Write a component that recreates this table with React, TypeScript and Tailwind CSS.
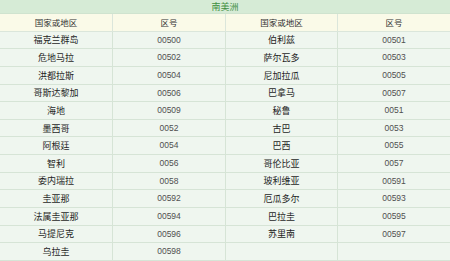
import React from "react";

const rows: [string, string, string, string][] = [
  ["福克兰群岛", "00500", "伯利兹", "00501"],
  ["危地马拉", "00502", "萨尔瓦多", "00503"],
  ["洪都拉斯", "00504", "尼加拉瓜", "00505"],
  ["哥斯达黎加", "00506", "巴拿马", "00507"],
  ["海地", "00509", "秘鲁", "0051"],
  ["墨西哥", "0052", "古巴", "0053"],
  ["阿根廷", "0054", "巴西", "0055"],
  ["智利", "0056", "哥伦比亚", "0057"],
  ["委内瑞拉", "0058", "玻利维亚", "00591"],
  ["圭亚那", "00592", "厄瓜多尔", "00593"],
  ["法属圭亚那", "00594", "巴拉圭", "00595"],
  ["马提尼克", "00596", "苏里南", "00597"],
  ["乌拉圭", "00598", "", ""],
];

function Cell({ text, index, header }: { text: string; index: number; header?: boolean }) {
  const base =
    "h-[17.64px] border-b flex items-center justify-center leading-none " +
    (index < 3 ? "border-r " : "");
  if (header) {
    return (
      <div
        className={
          base +
          "bg-[#fafae8] border-[#dbe6db] text-[8.5px] text-[#333] font-['Noto_Sans_CJK_SC','Noto_Sans',sans-serif]"
        }
      >
        {text}
      </div>
    );
  }
  const isName = index % 2 === 0;
  return (
    <div
      className={
        base +
        "bg-[#eff6ef] border-[#d6e4d6] " +
        (isName
          ? "text-[9px] text-[#1e1e1e] font-['Noto_Sans_CJK_SC','Noto_Sans',sans-serif]"
          : "text-[8.5px] text-[#505050] font-['Liberation_Sans',Arial,sans-serif]")
      }
    >
      {text}
    </div>
  );
}

export default function App() {
  return (
    <div className="w-[450px] h-[261px] bg-white overflow-hidden">
      <div className="h-[14px] bg-[#d6ebd6] border-b border-[#cfe3cf] flex items-center justify-center text-[9px] leading-none text-[#3f8f3f] font-['Noto_Sans_CJK_SC','Noto_Sans',sans-serif]">
        南美洲
      </div>
      <div className="grid grid-cols-[113px_113px_112px_112px]">
        {["国家或地区", "区号", "国家或地区", "区号"].map((t, i) => (
          <Cell key={i} text={t} index={i} header />
        ))}
        {rows.map((r, ri) => r.map((t, i) => <Cell key={`${ri}-${i}`} text={t} index={i} />))}
      </div>
    </div>
  );
}
